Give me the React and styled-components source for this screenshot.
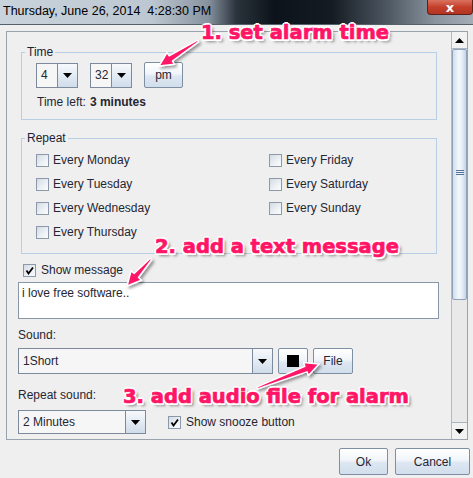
import React from "react";
import styled, { createGlobalStyle } from "styled-components";

const GlobalStyle = createGlobalStyle`
  body {
    margin: 0;
    background: #efefef;
    font-family: "Liberation Sans", Arial, sans-serif;
  }
`;

const Window = styled.div`
  position: relative;
  width: 473px;
  height: 478px;
  overflow: hidden;
  background: #efefef;
  display: flex;
  flex-direction: column;
  font-size: 12px;
  color: #262633;
`;

const TitleBar = styled.div`
  height: 24px;
  flex-shrink: 0;
  display: flex;
  justify-content: space-between;
  align-items: flex-start;
  border-bottom: 1px solid #55606b;
  background: linear-gradient(
    90deg,
    #c9d3dc 0%,
    #bcc7d1 32%,
    #8893a0 44%,
    #2a333c 50%,
    #0d131a 58%,
    #141b22 70%,
    #4e5862 82%,
    #8a949e 92%,
    #a4adb6 100%
  );
`;

const TitleText = styled.div`
  padding: 4px 0 0 3px;
  font-size: 12.5px;
  color: #000;
  white-space: pre;
`;

const CloseButton = styled.div`
  width: 44px;
  height: 14px;
  display: flex;
  align-items: center;
  justify-content: center;
  border: 1px solid #5e2018;
  border-top: none;
  border-radius: 0 0 4px 4px;
  background: linear-gradient(#d9735f, #c4402c 50%, #b23421);
  color: #fff;
  font: bold 13px "DejaVu Sans", sans-serif;
  line-height: 1;
`;

const ScrollPane = styled.div`
  margin: 6px 5px 0 6px;
  height: 407px;
  border: 1px solid #98a3ae;
  display: flex;
  flex-shrink: 0;
`;

const Viewport = styled.div`
  flex: 1;
  overflow: hidden;
  padding: 20px 12px 0 11px;
  display: flex;
  flex-direction: column;
`;

const Scrollbar = styled.div`
  width: 15px;
  border-left: 1px solid #b2bac3;
  background: #e9e9e9;
  display: flex;
  flex-direction: column;
`;

const ScrollArrow = styled.div`
  height: 16px;
  flex-shrink: 0;
  display: flex;
  align-items: center;
  justify-content: center;
  background: #f2f2f2;
  border-bottom: ${(p) => (p.$down ? "none" : "1px solid #a9b4c0")};
  border-top: ${(p) => (p.$down ? "1px solid #a9b4c0" : "none")};
  margin-top: ${(p) => (p.$down ? "auto" : "0")};
`;

const Thumb = styled.div`
  height: 251px;
  border: 1px solid #8fa2ba;
  border-radius: 2px;
  background: linear-gradient(90deg, #cfdcec, #f4f8fc 45%, #e6eef7 70%, #c3d3e6);
  display: flex;
  align-items: center;
  justify-content: center;
  padding-bottom: 4px;
  box-sizing: border-box;
`;

const Grip = styled.div`
  width: 8px;
  height: 5px;
  background: repeating-linear-gradient(#54719a 0 1px, transparent 1px 2px);
`;

const Group = styled.div`
  position: relative;
  margin: ${(p) => p.$top}px 2px 0 3px;
  border: 1px solid #b7cee4;
  padding: 9px 14px ${(p) => p.$bottom}px 14px;
`;

const Legend = styled.span`
  position: absolute;
  top: -8px;
  left: 3px;
  padding: 0 2px;
  background: #efefef;
  color: #1b2233;
  font-size: 12px;
  line-height: 14px;
`;

const Row = styled.div`
  display: flex;
  align-items: center;
  gap: ${(p) => p.$gap || 0}px;
  margin-top: ${(p) => p.$top || 0}px;
  padding-left: ${(p) => p.$indent || 0}px;
`;

const Combo = styled.div`
  display: flex;
  width: ${(p) => p.$w}px;
  height: ${(p) => p.$h}px;
  box-sizing: border-box;
  border: 1px solid #7c8a9b;
  background: #f6f6f6;
`;

const ComboValue = styled.div`
  flex: 1;
  display: flex;
  align-items: center;
  padding-left: 4px;
  font-size: 12px;
`;

const ComboArrow = styled.div`
  width: 19px;
  border-left: 1px solid #7c8a9b;
  background: linear-gradient(#f7f9fc, #e3ebf4 50%, #cfdcea);
  display: flex;
  align-items: center;
  justify-content: center;
`;

const Button = styled.div`
  width: ${(p) => p.$w}px;
  height: ${(p) => p.$h || 26}px;
  box-sizing: border-box;
  border: 1px solid #7e8ea3;
  border-radius: 2px;
  background: linear-gradient(#ffffff, #f1f5fa 45%, #dde7f2 55%, #d2deec);
  display: flex;
  align-items: center;
  justify-content: center;
  font-size: 12px;
  color: #262633;
`;

const Swatch = styled.div`
  width: 12px;
  height: 12px;
  background: #000;
`;

const TimeLeft = styled.div`
  margin-top: 7px;
  line-height: 14px;
  padding-left: 1px;
  b {
    margin-left: 4px;
  }
`;

const DayGrid = styled.div`
  display: grid;
  grid-template-columns: 233px 1fr;
  grid-auto-flow: column;
  grid-template-rows: repeat(4, 24px);
`;

const Check = styled.label`
  display: flex;
  align-items: center;
  gap: ${(p) => p.$gap || 4}px;
  line-height: 14px;
  margin-left: ${(p) => p.$left || 0}px;
`;

const Box = styled.span`
  width: 13px;
  height: 13px;
  box-sizing: border-box;
  border: 1px solid #8d99a9;
  background: linear-gradient(135deg, #d2dae4, #eef2f6 60%, #fafbfc);
  display: flex;
  align-items: center;
  justify-content: center;
`;

const MessageArea = styled.div`
  margin-top: 5px;
  height: 37px;
  box-sizing: border-box;
  border: 1px solid #8796a8;
  background: #fff;
  padding: 3px 3px;
  line-height: 14px;
`;

const Label = styled.div`
  margin-top: ${(p) => p.$top}px;
  line-height: 14px;
`;

const ButtonBar = styled.div`
  display: flex;
  justify-content: flex-end;
  gap: 7px;
  padding: 8px 3px 0 0;
`;

const Overlay = styled.svg`
  position: absolute;
  left: 0;
  top: 0;
  pointer-events: none;
`;

const Note = styled.div`
  position: absolute;
  left: ${(p) => p.$x}px;
  top: ${(p) => p.$y}px;
  white-space: nowrap;
  font: bold 19.5px "DejaVu Sans", sans-serif;
  line-height: 20px;
  color: #ff1466;
  -webkit-text-stroke: 0.7px #ff1466;
  text-shadow: -2px 0 0 #fff, 2px 0 0 #fff, 0 -2px 0 #fff, 0 2px 0 #fff,
    -1.5px -1.5px 0 #fff, 1.5px -1.5px 0 #fff, -1.5px 1.5px 0 #fff,
    1.5px 1.5px 0 #fff, 3px 3px 3px rgba(0, 0, 0, 0.45);
`;

const DownTri = () => (
  <svg width="9" height="5" viewBox="0 0 9 5">
    <path d="M0 0H9L4.5 5Z" fill="#000" />
  </svg>
);

const UpTri = () => (
  <svg width="9" height="5" viewBox="0 0 9 5">
    <path d="M0 5H9L4.5 0Z" fill="#000" />
  </svg>
);

const Tick = () => (
  <svg width="9" height="9" viewBox="0 0 9 9">
    <path d="M1.5 4.5L3.5 7.5L8 1.5" stroke="#000" strokeWidth="1.8" fill="none" />
  </svg>
);

const CheckBox = ({ checked, children, ...rest }) => (
  <Check {...rest}>
    <Box>{checked && <Tick />}</Box>
    {children}
  </Check>
);

const DropDown = ({ w, h, value }) => (
  <Combo $w={w} $h={h}>
    <ComboValue>{value}</ComboValue>
    <ComboArrow>
      <DownTri />
    </ComboArrow>
  </Combo>
);

function arrowPoints(tx, ty, px, py) {
  const dx = px - tx;
  const dy = py - ty;
  const len = Math.hypot(dx, dy);
  const ux = dx / len;
  const uy = dy / len;
  const nx = -uy;
  const ny = ux;
  const hl = 14;
  const hx = px - ux * hl;
  const hy = py - uy * hl;
  const pts = [
    [tx + nx * 1, ty + ny * 1],
    [hx + nx * 3, hy + ny * 3],
    [hx + nx * 7, hy + ny * 7],
    [px, py],
    [hx - nx * 7, hy - ny * 7],
    [hx - nx * 3, hy - ny * 3],
    [tx - nx * 1, ty - ny * 1],
  ];
  return pts.map((p) => p.map((v) => v.toFixed(1)).join(",")).join(" ");
}

const arrows = [
  [198, 41, 159, 66],
  [151, 259, 127, 286],
  [257, 388, 319, 364],
];

const days = [
  "Every Monday",
  "Every Tuesday",
  "Every Wednesday",
  "Every Thursday",
  "Every Friday",
  "Every Saturday",
  "Every Sunday",
];

export default function App() {
  return (
    <Window>
      <GlobalStyle />
      <TitleBar>
        <TitleText>Thursday, June 26, 2014  4:28:30 PM</TitleText>
        <CloseButton>x</CloseButton>
      </TitleBar>

      <ScrollPane>
        <Viewport>
          <Group $top={0} $bottom={10}>
            <Legend>Time</Legend>
            <Row>
              <DropDown w={42} h={25} value="4" />
              <Row $indent={12}>
                <DropDown w={42} h={25} value="32" />
              </Row>
              <Row $indent={12}>
                <Button $w={39} $h={26}>pm</Button>
              </Row>
            </Row>
            <TimeLeft>
              Time left:<b>3 minutes</b>
            </TimeLeft>
          </Group>

          <Group $top={18} $bottom={9}>
            <Legend>Repeat</Legend>
            <DayGrid>
              {days.map((d) => (
                <CheckBox key={d}>{d}</CheckBox>
              ))}
            </DayGrid>
          </Group>

          <Row $top={9} $indent={5}>
            <CheckBox checked $gap={5}>Show message</CheckBox>
          </Row>
          <MessageArea>i love free software..</MessageArea>

          <Label $top={9}>Sound:</Label>
          <Row $top={6} $gap={5}>
            <DropDown w={255} h={26} value="1Short" />
            <Button $w={30}>
              <Swatch />
            </Button>
            <Button $w={40}>File</Button>
          </Row>

          <Label $top={14}>Repeat sound:</Label>
          <Row $top={8}>
            <DropDown w={128} h={24} value="2 Minutes" />
            <CheckBox checked $gap={5} $left={22}>
              Show snooze button
            </CheckBox>
          </Row>
        </Viewport>
        <Scrollbar>
          <ScrollArrow>
            <UpTri />
          </ScrollArrow>
          <Thumb>
            <Grip />
          </Thumb>
          <ScrollArrow $down>
            <DownTri />
          </ScrollArrow>
        </Scrollbar>
      </ScrollPane>

      <ButtonBar>
        <Button $w={49} $h={27}>Ok</Button>
        <Button $w={75} $h={27}>Cancel</Button>
      </ButtonBar>

      <Overlay width="473" height="478">
        <defs>
          <filter id="shadow" x="-20%" y="-20%" width="140%" height="140%">
            <feDropShadow dx="2" dy="2" stdDeviation="1.5" floodOpacity="0.4" />
          </filter>
        </defs>
        {arrows.map(([a, b, c, d], i) => (
          <polygon
            key={i}
            points={arrowPoints(a, b, c, d)}
            fill="#ff1466"
            stroke="#fff"
            strokeWidth="1.5"
            strokeLinejoin="round"
            filter="url(#shadow)"
          />
        ))}
      </Overlay>

      <Note $x={201} $y={23}>1. set alarm time</Note>
      <Note $x={155} $y={237}>2. add a text message</Note>
      <Note $x={123} $y={387}>3. add audio file for alarm</Note>
    </Window>
  );
}
